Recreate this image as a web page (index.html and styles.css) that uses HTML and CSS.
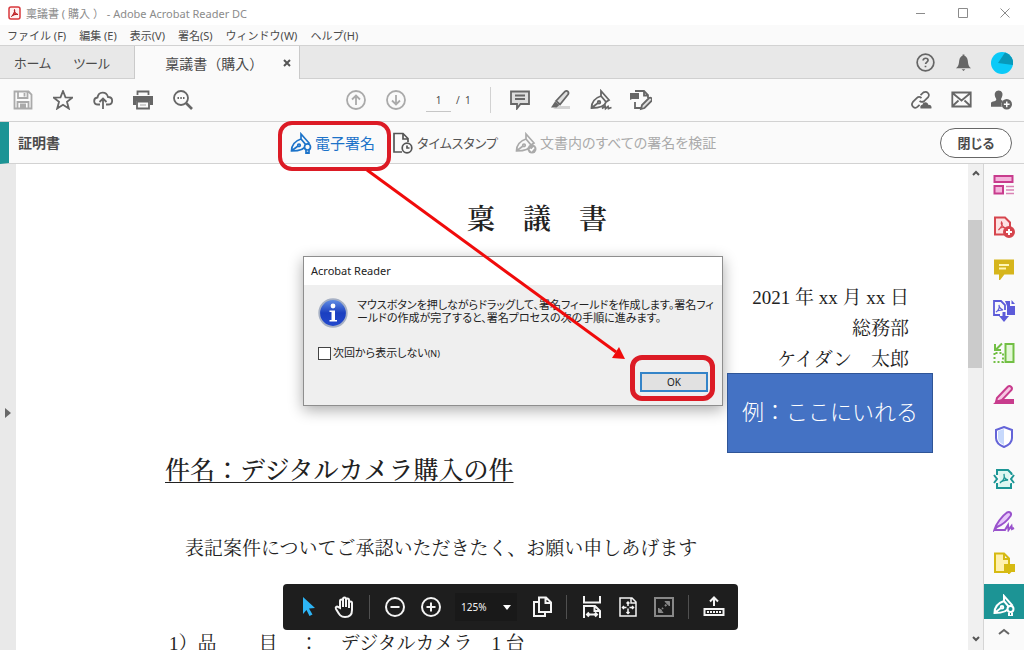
FILE: index.html
```html
<!DOCTYPE html>
<html lang="ja">
<head>
<meta charset="utf-8">
<title>稟議書（購入） - Adobe Acrobat Reader DC</title>
<meta name="viewport" content="width=device-width, initial-scale=1">
<link rel="stylesheet" href="styles.css">
</head>
<body>
<svg class="defs" aria-hidden="true">
  <symbol id="pen" viewBox="0 0 22 22"><path d="M1.500 19C1.500 13 5 9 11 7l5 6c-1 4-6 6-14.500 6zM2 18.500l6-4.500M11 7V2l8 9-3 2"/><circle cx="9" cy="13.300" r="1.300"/></symbol>
</svg>
<div class="app">
  <header class="titlebar">
    <svg class="logo" viewBox="0 0 13 14"><rect x="1" y="1" width="11" height="12" rx="2" fill="#fff1f1" stroke="#d9383c" stroke-width="1.500"/><path d="M6.500 3.500c-.8 1 1 4.500 3.500 5-2-.4-5 .3-6.500 2C5 9 7.500 4.500 6.500 3.500z" fill="#d9383c" stroke="#b3181d"/></svg>
    <h1 class="titlebar-text">稟議書 ( 購入 ） - Adobe Acrobat Reader DC</h1>
    <div class="window-buttons">
      <button aria-label="最小化"><svg viewBox="0 0 12 12"><path d="M1 6.500h9"/></svg></button>
      <button aria-label="最大化"><svg viewBox="0 0 12 12"><path d="M1.500 1.500h9v9h-9z"/></svg></button>
      <button aria-label="ウィンドウを閉じる"><svg viewBox="0 0 12 12"><path d="M1.500 1.500l9 9M10.500 1.500l-9 9"/></svg></button>
    </div>
  </header>
  <nav class="menubar">
    <button>ファイル (F)</button><button>編集 (E)</button><button>表示(V)</button><button>署名(S)</button><button>ウィンドウ(W)</button><button>ヘルプ(H)</button>
  </nav>
  <nav class="tabs">
    <button class="tab-link">ホーム</button><button class="tab-link">ツール</button>
    <div class="tab-active"><span>稟議書（購入）</span><button class="tab-close" aria-label="タブを閉じる"><svg viewBox="0 0 8 8"><path d="M1 1l6 6M7 1L1 7"/></svg></button></div>
    <div class="tab-actions">
      <button class="icon" aria-label="ヘルプ"><svg viewBox="0 0 20 20"><circle cx="10" cy="10" r="8.800"/><path d="M7.500 8c0-3.500 5.200-3 5.200-.3 0 1.800-2.600 2-2.600 4M10 13.500v1.500"/></svg></button>
      <button class="icon" aria-label="通知"><svg viewBox="0 0 20 20"><path class="solid" d="M2 16c3-2 3-4 3.500-8C6 5 7.500 3.500 9 3V1.500h2V3c1.500.5 3 2 3.500 5 .5 4 .5 6 3.500 8zM8 17h4l-2 2z"/></svg></button>
      <button class="icon" aria-label="アカウント"><svg class="avatar" viewBox="0 0 22 22"><circle cx="11" cy="11" r="11" fill="#0bcaf8"/><path d="M7 11L14 .5A11 11 0 0 1 22 13z" fill="#0899ba"/></svg></button>
    </div>
  </nav>
  <div class="toolbar">
    <div class="tool-group tool-start">
      <button class="icon pale" aria-label="保存"><svg viewBox="0 0 20 20"><path d="M1.500 1.500h14l3 3v14h-17zM5 1.500v6.500h9.500V1.500M11.500 3v3.500M4.500 18.500V12h11v6.500M7 14.500h6M7 16.500h6"/></svg></button>
      <button class="icon" aria-label="お気に入り"><svg viewBox="0 0 20 20"><path d="M10 1l2.500 6.300 6.700.4-5.200 4.200 1.800 6.600L10 14.800l-5.800 3.700L6 11.900.8 7.700l6.700-.4z"/></svg></button>
      <button class="icon" aria-label="アップロード"><svg viewBox="0 0 20 20"><path d="M7 14.500H5C0 14.500 0 8 4.500 7.500 5.500 1 13.500 1 15 7c5.500 0 5.500 7.500 0 7.500h-2M10 19V9M6.500 12L10 8.500l3.500 3.500"/></svg></button>
      <button class="icon" aria-label="印刷"><svg viewBox="0 0 20 20"><path class="solid" d="M0 6h20v9h-3v-4H3v4H0z"/><path d="M4.500 5V1.500h11V5M4 11.500h12v7H4z"/><path d="M7 14h6v2H7z" fill="#d0d0d0" stroke="none"/></svg></button>
      <button class="icon" aria-label="検索"><svg viewBox="0 0 20 20"><circle cx="8" cy="8" r="7"/><path d="M13 13l6 6" stroke-width="2.600"/><path d="M4.500 8h1.500M7.300 8h1.500M10 8h1.500"/></svg></button>
    </div>
    <div class="tool-group tool-middle">
      <button class="icon pale" aria-label="前のページ"><svg viewBox="0 0 20 20"><circle cx="10" cy="10" r="9"/><path d="M10 15V5.500M6 9.500l4-4 4 4"/></svg></button>
      <button class="icon pale" aria-label="次のページ"><svg viewBox="0 0 20 20"><circle cx="10" cy="10" r="9"/><path d="M10 5v9.500M6 10.500l4 4 4-4"/></svg></button>
      <div class="pager"><input type="text" value="1" aria-label="ページ番号"><span>/&nbsp; 1</span></div>
      <i class="divider"></i>
      <button class="icon" aria-label="コメント"><svg viewBox="0 0 20 20"><path d="M1 1.500h18v12.500h-8.500L7 18.500V14H1z" fill="#ddd"/><path d="M5 5.500h10M5 9h10"/></svg></button>
      <button class="icon" aria-label="ハイライト"><svg viewBox="0 0 20 20"><path d="M8 16h12v3H3z" fill="#d3d3d3" stroke="none"/><path d="M6 11L15 1.500c2-1.500 4.500.5 3 3L10 14.500z" fill="#ddd"/><path class="solid" d="M5 11.500L9.500 15l-3 2.500H1z"/></svg></button>
      <button class="icon" aria-label="署名"><svg viewBox="0 0 22 22"><use href="#pen"/><path d="M12 19.500l3-2.500.5 2.500 2.500-2 .5 2 3-1"/></svg></button>
      <button class="icon" aria-label="編集"><svg viewBox="0 0 22 22"><path d="M5 2h9l4 4v3M14 2v4.500h4M5 13v6h6"/><path class="solid" d="M0 4h9v6H2l-2 1z"/><path d="M11 20l1-4 7-7c2-1 4 1 2.500 3l-7 7z" fill="#ddd"/></svg></button>
    </div>
    <div class="tool-group tool-end">
      <button class="icon" aria-label="リンクを共有"><svg viewBox="0 0 22 20"><path d="M10 5l3-3c4-2 7 2 5 5l-4 4c-2 1.500-4 1-5 0M11 8c-2-2-4-1-5 0l-4 4c-3 4 2 8 5 5l2-2"/><path class="solid" d="M10 19c-1-4 2-4 2-4 1-4 6-3 6 0 4-.5 4 4 3 4z"/></svg></button>
      <button class="icon" aria-label="メール"><svg viewBox="0 0 20 20"><path d="M.8 2.500h18.400v14H.8zM1 3l9 7.500L19 3M1 16l6-5.500M19 16l-6-5.500"/></svg></button>
      <button class="icon" aria-label="ユーザーを追加"><svg viewBox="0 0 22 20"><path class="solid" d="M0 17v-4c1-2 6-1 5.500-4C2 3 5 0 8 0s6 3 2.500 9c0 1 1 1.500 2 2-2 2-2 4-1 6z"/><circle class="solid" cx="16.500" cy="14.500" r="5.500"/><path d="M16.500 11.500v6M13.500 14.500h6" stroke="#fff" stroke-width="1.500"/></svg></button>
    </div>
  </div>
  <div class="certbar">
    <h2 class="cert-title">証明書</h2>
    <div class="cert-actions">
      <button class="cert-action sign"><svg viewBox="0 0 22 22"><use href="#pen"/><circle cx="17.500" cy="15" r="3" fill="#fafafa"/><path d="M16 18v3.500l1.500-1 1.500 1V18"/></svg><span>電子署名</span></button>
      <button class="cert-action stamp"><svg viewBox="0 0 22 22"><path d="M10 20H2V1.500h9l5 5V10M11 1.500V7h5"/><circle cx="15" cy="16" r="4.800" fill="#fafafa"/><path d="M15 13.500V16h2.500"/></svg><span>タイムスタンプ</span></button>
      <button class="cert-action verify" disabled><svg viewBox="0 0 22 22"><use href="#pen"/><circle class="solid" cx="17" cy="17" r="4.500"/><path d="M15 17l1.500 1.500L19 15.500" stroke="#fff"/></svg><span>文書内のすべての署名を検証</span></button>
    </div>
    <button class="close-button">閉じる</button>
  </div>
  <main class="viewer">
    <button class="nav-strip" aria-label="ナビゲーションを開く"><svg viewBox="0 0 6 10"><path d="M0 0l6 5-6 5z" fill="#686868"/></svg></button>
    <article class="page">
      <h2 class="doc-title">稟　議　書</h2>
      <div class="doc-meta"><p>2021 年 xx 月 xx 日</p><p>総務部</p><p>ケイダン　太郎</p></div>
      <h3 class="doc-subject">件名：デジタルカメラ購入の件</h3>
      <p class="doc-body">表記案件についてご承認いただきたく、お願い申しあげます</p>
      <p class="doc-item"><span>1）品</span><span>目</span><span>：</span><span>デジタルカメラ　1 台</span></p>
    </article>
    <div class="scrollbar">
      <svg viewBox="0 0 8 6"><path d="M1 5l3-3 3 3"/></svg>
      <div class="track"><div class="thumb"></div></div>
      <svg viewBox="0 0 8 6"><path d="M1 1l3 3 3-3"/></svg>
    </div>
    <aside class="rail">
      <div class="rail-tools">
        <button aria-label="PDF を編集"><svg viewBox="0 0 22 22"><g stroke="#c83c8d" fill="#f5b5dc"><path d="M1.500 2h18v6h-18zM1.500 12h8.500v7.500H1.500z"/><path d="M13 12.500h8M13 16h8M13 19.500h8" stroke="#d982b5" stroke-width="1.500"/></g></svg></button>
        <button aria-label="PDF を作成"><svg viewBox="0 0 22 22"><g stroke="#d6454d" fill="#fde3e3"><path d="M2 1.500h10l5 5v12H2z"/><path d="M8.500 6c-1 2 1 5 4 6-3-1-6 0-7 2 2-2 5-6 3-8z" stroke-width="1.200"/><circle cx="16" cy="16" r="5" fill="#d6454d"/><path d="M16 13v6M13 16h6" stroke="#fff"/></g></svg></button>
        <button aria-label="注釈"><svg viewBox="0 0 22 22"><path d="M2 2.500h18v13h-9l-4 5v-5H2z" fill="#d6b51c" stroke="#d6b51c"/><path d="M6 7h10M6 10.500h7" stroke="#fff5b5"/></svg></button>
        <button aria-label="ファイルを結合"><svg viewBox="0 0 22 22"><g stroke="#5c5bd9" fill="none"><path d="M7 15H1V1h7l4 4v5" stroke-width="1.800"/><path d="M12 1h5v5h5v9h-8V6z" fill="#5c5bd9" stroke="none"/><path d="M18.500 0L22 4h-3.500z" fill="#5c5bd9" stroke="none"/><path d="M3 12c2-1 4-4 3-7 0 3 2 4 4 5-3 0-5 0-7 2z" stroke-width="1.200"/><path d="M11 12v6" stroke-width="3"/><path d="M6 16h10l-5 6z" fill="#5c5bd9" stroke="none"/></g></svg></button>
        <button aria-label="ページを整理"><svg viewBox="0 0 22 22"><g stroke="#72bf44" fill="none"><path d="M12.500 2h8v18h-8z" fill="#e3f8d6"/><path d="M1.500 11v9H10v-9z" stroke-dasharray="2 2"/><path d="M9 1.500L3 7.500M2 2v6h6"/></g></svg></button>
        <button aria-label="墨消し"><svg viewBox="0 0 22 22"><g stroke="#c83c8d" fill="#f7c7e2"><path d="M4 14L15 2.500c2-1.500 5 1 3.500 3.500L9 16l-6 2z"/><path d="M0 20l5-4h3l2-1h11v5z" fill="#c83c8d" stroke="none"/></g></svg></button>
        <button aria-label="保護"><svg viewBox="0 0 22 22"><path d="M11 1l8 3v8c0 4-3 7-8 9-5-2-8-5-8-9V4z" fill="#fff" stroke="#6464d8"/><path d="M11 3v16c-4-2-6-4-6-7V5z" fill="#c7d9fc"/></svg></button>
        <button aria-label="PDF を最適化"><svg viewBox="0 0 22 22"><g stroke="#1c9695" fill="#ddf7f1"><path d="M4 7V2h11l3.500 3.500V7M18 15v5H4v-5"/><path d="M5 6h12.500l-2 5 2 5H5l2-5z" stroke="none"/><path d="M1 7l3 4-3 4M21 7l-3 4 3 4" fill="none"/><path d="M11 6c0 4 1 5 4 6-3 0-6 0-8 3 3-2 5-5 4-9z" stroke-width="1.300"/></g></svg></button>
        <button aria-label="入力と署名"><svg viewBox="0 0 22 22"><g stroke="#9952cc" fill="#e7c6fa"><path d="M1.500 19.500C3 14 9 6 14 2.500c3-1.500 5 1 3.500 3.500C14 11 9 15 4 17z"/><path d="M1 20h11l3-5 .5 5 3-4 .5 3 2-1" fill="none"/></g></svg></button>
        <button aria-label="レビュー用に送信"><svg viewBox="0 0 22 22"><g stroke="#d6ba12" fill="#fff1ae"><path d="M2 1.500h9l5 5V20H2zM11 1.500V7h5"/><path d="M12 13h9v6h-3l-2 2v-2h-4z" fill="#d6ba12"/></g></svg></button>
        <button class="active" aria-label="証明書"><svg viewBox="0 0 22 22"><use href="#pen"/><circle cx="17.500" cy="15" r="3" fill="#1c9495"/><path d="M16 18.500V22h3v-3.500"/></svg></button>
      </div>
      <button class="rail-more" aria-label="上へスクロール"><svg viewBox="0 0 12 7"><path d="M1 6l5-4 5 4"/></svg></button>
    </aside>

    <section class="dialog" role="dialog" aria-labelledby="dialog-title">
      <h2 class="dialog-title" id="dialog-title">Acrobat Reader</h2>
      <div class="dialog-body">
        <div class="dialog-message">
          <svg viewBox="0 0 30 30"><defs><linearGradient id="blue" x2="0" y2="1"><stop stop-color="#6592e5"/><stop offset=".5" stop-color="#1b3fc0"/><stop offset="1" stop-color="#2349ce"/></linearGradient></defs><circle cx="15" cy="15" r="13.800" fill="url(#blue)" stroke="#a6b0c4" stroke-width="1.800"/><circle cx="15" cy="8" r="2.400" fill="#fff"/><path d="M11.500 12.500h5.500v9.500h2v1.500h-7.500V22h2v-8h-2z" fill="#fff"/></svg>
          <p>マウスボタンを押しながらドラッグして、署名フィールドを作成します。署名フィ<br>ールドの作成が完了すると、署名プロセスの次の手順に進みます。</p>
        </div>
        <label class="dialog-check"><input type="checkbox"><span>次回から表示しない<small>(N)</small></span></label>
        <button class="ok-button">OK</button>
      </div>
    </section>
    <div class="sample-box">例：ここにいれる</div>
    <div class="ring ring-sign"></div>
    <div class="ring ring-ok"></div>
    <svg class="arrow" viewBox="0 0 260 194"><path d="M1 2L250 184" stroke="#f00b0b" stroke-width="3"/><path d="M259 191l-13-1 7-11z" fill="#f00b0b"/></svg>

    <div class="floatbar">
      <button aria-label="選択"><svg viewBox="0 0 22 22"><path d="M5 1l12 11-6 .5 3.500 6-3 1.500-3-6L5 18z" fill="#2db4f5" stroke="none"/></svg></button>
      <button aria-label="手のひら"><svg viewBox="0 0 22 22"><path d="M6 12V5c0-2 3-2 3 0v6V3c0-2 3-2 3 0v8-7c0-2 3-2 3 0v8-5c0-2 3-2 3 0v7c0 5-3 7-7 7-5 0-6-3-9-8-1-2 1-3 2-2z"/></svg></button>
      <i></i>
      <button aria-label="縮小"><svg viewBox="0 0 22 22"><circle cx="11" cy="11" r="9"/><path d="M6.500 11h9"/></svg></button>
      <button aria-label="拡大"><svg viewBox="0 0 22 22"><circle cx="11" cy="11" r="9"/><path d="M6.500 11h9M11 6.500v9"/></svg></button>
      <div class="zoom"><select aria-label="ズーム"><option>125%</option></select><svg viewBox="0 0 8 5"><path d="M0 0h8L4 5z" fill="#fff" stroke="none"/></svg></div>
      <button aria-label="ページ表示"><svg viewBox="0 0 22 22"><path d="M8 1.500h7l5 5V16H8zM14.500 2v5H20M8 6H3v14h11v-4"/></svg></button>
      <i></i>
      <button aria-label="幅に合わせる"><svg viewBox="0 0 22 22"><path d="M3 0v6.500h16V0M3 22V10h11l5 5v7M13.500 10v5H19M6 18.500h10M8 16.500l-2 2 2 2M14 16.500l2 2-2 2" /></svg></button>
      <button aria-label="全体表示"><svg viewBox="0 0 22 22"><path d="M3 2h12l4 4v14H3zM14 2v5h5M11 6v4M11 12.500v5M5.500 11.500h4M12.500 11.500h4M9.500 7.500L11 6l1.500 1.500M9.500 16l1.500 1.500 1.500-1.500M7 10l-1.500 1.500L7 13M15 10l1.500 1.500L15 13" stroke-width="1.500"/></svg></button>
      <button class="dim" aria-label="全画面"><svg viewBox="0 0 22 22"><path d="M2 2h18v18H2z"/><path d="M12 5.500h4.500V10zM5.500 12v4.500H10z" fill="#888" stroke-width="1"/><path d="M12 10l3-3M7 15l3-3" stroke-dasharray="2 1"/></svg></button>
      <i></i>
      <button aria-label="ツールバーを固定"><svg viewBox="0 0 22 22"><path d="M11 10V2M7 5.500l4-4 4 4M1.500 13h19v6h-19z"/><path d="M4 16h14" stroke-dasharray="2 1"/></svg></button>
    </div>
  </main>
</div>
</body>
</html>
```

FILE: styles.css
```css
* { box-sizing: border-box; }
body { margin: 0; font-family: "Noto Sans", "Noto Sans CJK JP", sans-serif; color: #4b4b4b; }
h1, h2, h3, p { margin: 0; font-weight: 400; }
button { padding: 0; border: 0; background: none; color: inherit; font: inherit; }
svg { display: block; flex: none; fill: none; }
.defs { position: absolute; width: 0; height: 0; }
.app { display: flex; flex-direction: column; height: 100vh; overflow: hidden; background: #fafafa; }

.titlebar { display: flex; align-items: center; flex: none; height: 25px; padding-left: 8px; gap: 5px; background: #fff; }
.logo { width: 13px; height: 14px; }
.titlebar-text { flex: 1; font-size: 11px; color: #8b8b8b; white-space: nowrap; }
.window-buttons { display: flex; gap: 30px; padding-right: 13px; }
.window-buttons svg { width: 12px; height: 12px; stroke: #8b8b8b; }

.menubar { display: flex; align-items: center; flex: none; height: 20px; padding-left: 7px; gap: 13px; font-size: 11px; white-space: nowrap; }

.tabs { display: flex; align-items: stretch; flex: none; height: 34px; border-top: 1px solid #d2d2d2; background: #e8e8e8; font-size: 14px; box-shadow: inset 0 -1px #d0d0d0; }
.tab-link { margin-left: 14px; margin-right: 8px; font-size: 13px; font-feature-settings: "palt"; }
.tab-active { display: flex; align-items: center; justify-content: space-between; width: 166px; margin-left: 16px; padding: 0 8px 0 30px; background: #fafafa; border: solid #cacaca; border-width: 0 1px; white-space: nowrap; }
.tab-close svg { width: 8px; height: 8px; stroke: #555; stroke-width: 2; }
.tab-actions { display: flex; align-items: center; gap: 18px; margin-left: auto; padding-right: 13px; }

.icon { display: grid; place-items: center; width: 20px; height: 22px; color: #666; }
.icon svg { width: 20px; height: 20px; stroke: currentColor; stroke-width: 1.8; }
.icon .avatar { width: 22px; height: 22px; stroke: none; }
.tabs .icon svg:not(.avatar) { width: 19px; height: 19px; }
.pale { color: #aaa; }
.solid { fill: currentColor; stroke: none; }
.toolbar { display: grid; grid-template-columns: 346px 1fr auto; align-items: center; flex: none; height: 43px; border-bottom: 1px solid #d2d2d2; }
.tool-group { display: flex; align-items: center; gap: 20px; }
.tool-start { padding-left: 13px; }
.tool-end { padding-right: 13px; }
.tool-end .icon svg { width: 21px; }
.tool-middle .icon:nth-last-child(-n+2) svg { width: 22px; height: 22px; }
.pager { display: flex; align-items: center; gap: 5px; width: 45px; font-size: 10px; white-space: nowrap; }
.pager input { width: 25px; height: 24px; padding: 0; border: 0; border-bottom: 1px solid #c6c6c6; background: none; color: inherit; font: inherit; text-align: center; }
.divider { width: 1px; height: 26px; margin: 0 -1px; background: #d2d2d2; }

.certbar { display: grid; grid-template-columns: 281px 1fr auto; align-items: center; flex: none; height: 42px; padding-right: 12px; border-left: 9px solid #1c9495; border-bottom: 1px solid #d2d2d2; }
.cert-title { padding-left: 9px; font-size: 14px; line-height: 20px; font-weight: 700; }
.cert-actions { display: flex; gap: 17px; }
.cert-action { display: flex; align-items: center; gap: 3px; font-size: 15px; line-height: 22px; white-space: nowrap; font-feature-settings: "palt"; }
.cert-action svg { width: 22px; height: 22px; stroke: currentColor; stroke-width: 1.7; }
.sign { color: #1c73c9; }
.stamp { color: #555; font-size: 13px; }
.verify { color: #aaa; font-size: 14px; }
.close-button { width: 72px; height: 30px; border: 1px solid #666; border-radius: 15px; background: #fff; font-size: 13px; line-height: 20px; font-weight: 700; font-feature-settings: "palt"; }

.viewer { position: relative; display: flex; flex: 1; min-height: 0; background: #fff; }
.nav-strip { display: grid; place-items: center; flex: none; width: 16px; padding-top: 12px; background: #e9e9e9; }
.nav-strip svg { width: 6px; height: 10px; }
.page { flex: 1; min-width: 0; padding: 36px 59px 0 149px; overflow: hidden; color: #222; font-family: "Liberation Serif", "Noto Serif CJK JP", "Noto Sans CJK JP", serif; font-size: 19px; }
.doc-title { font-size: 28px; line-height: 40px; text-align: center; font-weight: 600; }
.doc-meta { padding-top: 42px; line-height: 31px; text-align: right; }
.doc-subject { padding-top: 78px; font-size: 25px; line-height: 36px; font-weight: 500; text-decoration: underline; text-decoration-thickness: 1px; text-underline-offset: 3px; }
.doc-body { padding: 44px 0 0 20px; line-height: 31px; }
.doc-item { display: flex; gap: 42px; padding: 64px 0 0 4px; line-height: 31px; white-space: nowrap; }
.doc-item span:nth-child(3) { margin: 0 -20px; }

.scrollbar { display: flex; flex-direction: column; align-items: center; flex: none; width: 15px; padding: 6px 0 8px; gap: 6px; background: #f0f0f0; }
.scrollbar svg { width: 8px; height: 6px; stroke: #555; stroke-width: 2; }
.track { flex: 1; width: 100%; padding-top: 38px; }
.thumb { height: 36%; width: 14px; background: #cbcbcb; }
.rail { display: flex; flex-direction: column; flex: none; width: 41px; border-left: 1px solid #d5d5d5; background: #fafafa; }
.rail-tools { flex: 1; min-height: 0; overflow: hidden; }
.rail-tools button { display: grid; place-items: center; width: 100%; height: 42px; }
.rail-tools svg { width: 22px; height: 22px; stroke-width: 2; }
.rail-tools .active { background: #1c9495; color: #fff; }
.rail-tools .active svg { stroke: #fff; }
.rail-more { display: grid; justify-items: center; height: 31px; padding-top: 9px; }
.rail-more svg { width: 12px; height: 7px; stroke: #666; stroke-width: 2; }

.dialog { position: absolute; left: 303px; top: 92px; display: flex; flex-direction: column; width: 420px; height: 150px; border: 1px solid #8e8e8e; background: #efefef; color: #222; box-shadow: 0 4px 14px #0005; }
.dialog-title { padding: 0 7px; background: #fff; font-size: 11px; line-height: 28px; }
.dialog-body { display: flex; flex-direction: column; flex: 1; padding: 13px 14px; }
.dialog-message { display: flex; gap: 9px; font-size: 11px; line-height: 13px; font-feature-settings: "palt"; white-space: nowrap; }
.dialog-message svg { width: 30px; height: 30px; }
.dialog-check { display: flex; align-items: center; gap: 2px; margin-top: 16px; font-size: 11px; line-height: 18px; font-feature-settings: "palt"; }
.dialog-check input { appearance: none; width: 13px; height: 13px; margin: 0; border: 1px solid #444; background: #fff; }
.dialog-check small { font-size: 9px; }
.ok-button { align-self: flex-end; flex: none; width: 68px; height: 20px; margin-top: 9px; border: 2px solid #3484c8; background: #e1e1e1; font-size: 10px; line-height: 14px; }
.sample-box { position: absolute; left: 727px; top: 209px; display: grid; place-items: center; width: 206px; height: 80px; padding-bottom: 6px; border: 1px solid #2f5597; background: #4472c4; color: #fff; font-family: "Noto Sans CJK JP", sans-serif; font-size: 22px; font-weight: 300; white-space: nowrap; }
.ring { position: absolute; border: 5px solid #dc1b25; pointer-events: none; }
.ring-sign { left: 278px; top: -43px; width: 113px; height: 50px; border-width: 4px; border-radius: 14px; }
.ring-ok { left: 630px; top: 191px; width: 85px; height: 46px; border-radius: 12px; }
.arrow { position: absolute; left: 366px; top: 4px; width: 260px; height: 194px; pointer-events: none; }

.floatbar { position: absolute; left: 283px; bottom: 20px; display: flex; align-items: center; gap: 13px; height: 46px; padding: 0 13px 0 14px; border-radius: 4px; background: #1e1e1e; color: #f4f4f4; }
.floatbar button { display: grid; place-items: center; width: 23px; }
.floatbar button svg { width: 22px; height: 22px; stroke: currentColor; stroke-width: 2; }
.floatbar > i { width: 1px; height: 24px; background: #505050; }
.floatbar .dim { color: #888; }
.zoom { display: flex; align-items: center; gap: 6px; width: 62px; height: 28px; padding: 0 6px; background: #191919; }
.zoom select { appearance: none; width: 38px; padding: 0; border: 0; background: none; color: inherit; font: 10px "Noto Sans", sans-serif; }
.zoom svg { width: 8px; height: 5px; }
```
